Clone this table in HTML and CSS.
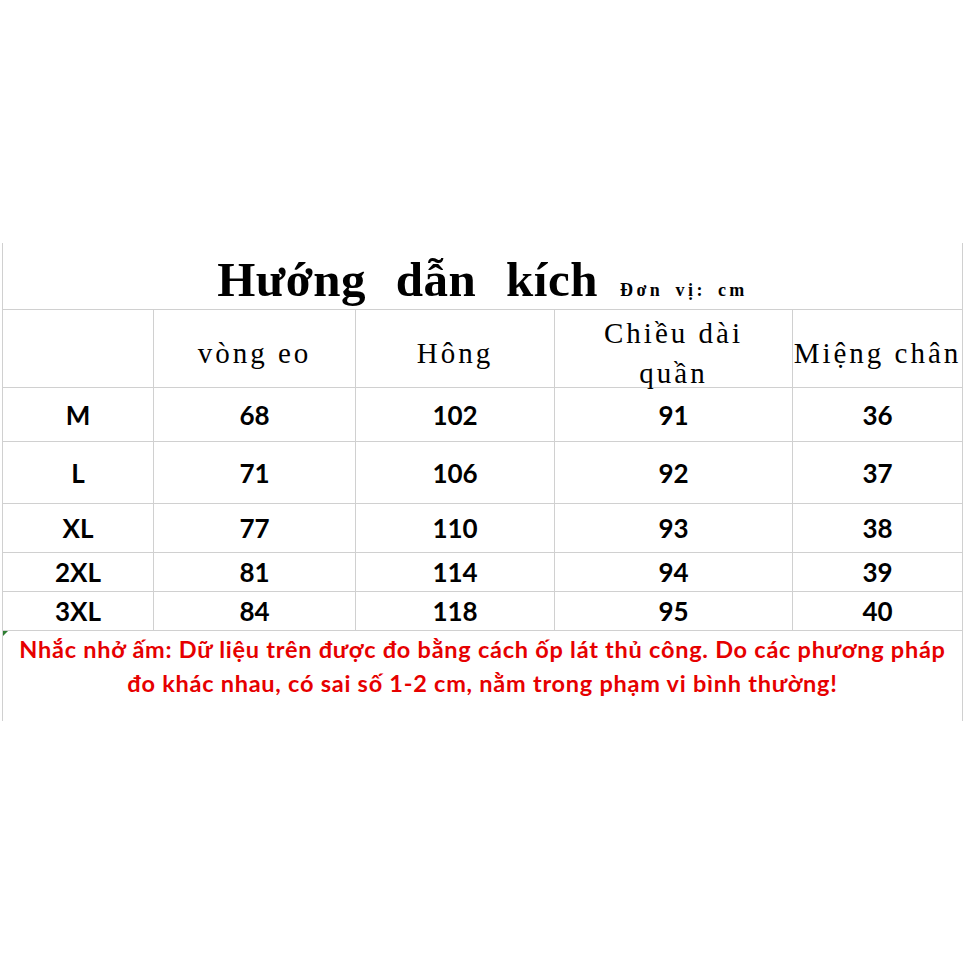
FILE: index.html
```html
<!DOCTYPE html>
<html lang="vi">
<head>
<meta charset="utf-8">
<title>Hướng dẫn kích</title>
<link rel="stylesheet" href="styles.css">
</head>
<body>
<div class="sheet">
  <div class="title-row">
    <span class="title">Hướng dẫn kích</span>
    <span class="unit">Đơn vị: cm</span>
  </div>
  <div class="grid">
    <div class="cell head"></div>
    <div class="cell head">vòng eo</div>
    <div class="cell head">Hông</div>
    <div class="cell head two">Chiều dài<br>quần</div>
    <div class="cell head last">Miệng chân</div>

    <div class="cell data r1">M</div>
    <div class="cell data r1">68</div>
    <div class="cell data r1">102</div>
    <div class="cell data r1">91</div>
    <div class="cell data r1 last">36</div>

    <div class="cell data r2">L</div>
    <div class="cell data r2">71</div>
    <div class="cell data r2">106</div>
    <div class="cell data r2">92</div>
    <div class="cell data r2 last">37</div>

    <div class="cell data r3">XL</div>
    <div class="cell data r3">77</div>
    <div class="cell data r3">110</div>
    <div class="cell data r3">93</div>
    <div class="cell data r3 last">38</div>

    <div class="cell data r4">2XL</div>
    <div class="cell data r4">81</div>
    <div class="cell data r4">114</div>
    <div class="cell data r4">94</div>
    <div class="cell data r4 last">39</div>

    <div class="cell data r5">3XL</div>
    <div class="cell data r5">84</div>
    <div class="cell data r5">118</div>
    <div class="cell data r5">95</div>
    <div class="cell data r5 last">40</div>
  </div>
  <div class="note">
    <p>Nhắc nhở ấm: Dữ liệu trên được đo bằng cách ốp lát thủ công. Do các phương pháp<br>đo khác nhau, có sai số 1-2 cm, nằm trong phạm vi bình thường!</p>
  </div>
</div>
</body>
</html>
```
FILE: styles.css
```css
html, body {
  margin: 0;
  padding: 0;
  background: #ffffff;
}

.sheet {
  box-sizing: border-box;
  width: 961px;
  margin: 243px 0 0 2px;
  border-left: 1px solid #d0d0d0;
  border-right: 1px solid #d0d0d0;
  color: #000;
}

.title-row {
  box-sizing: border-box;
  height: 67px;
  border-bottom: 1px solid #d0d0d0;
  display: flex;
  justify-content: center;
  align-items: baseline;
  padding-top: 12px;
  padding-left: 0;
}

.title {
  font-family: "Liberation Serif", "Times New Roman", serif;
  font-weight: 700;
  font-size: 49px;
  line-height: 1;
  word-spacing: 17px;
  letter-spacing: 0.5px;
}

.unit {
  font-family: "Liberation Serif", "Times New Roman", serif;
  font-weight: 700;
  font-size: 18px;
  letter-spacing: 3.5px;
  word-spacing: 4px;
  margin-left: 22px;
}

.grid {
  display: grid;
  grid-template-columns: 151px 202px 199px 238px 1fr;
  grid-template-rows: 78px 54px 62px 49px 39px 39px;
}

.cell {
  box-sizing: border-box;
  border-right: 1px solid #d0d0d0;
  border-bottom: 1px solid #d0d0d0;
  display: flex;
  align-items: center;
  justify-content: center;
  text-align: center;
  white-space: nowrap;
}

.cell.last {
  border-right: none;
}

.head {
  font-family: "Liberation Serif", "Times New Roman", serif;
  font-size: 29px;
  line-height: 40px;
  letter-spacing: 3px;
  padding-top: 8px;
}

.data {
  font-family: "Lato", "Open Sans", sans-serif;
  font-weight: 700;
  font-size: 26px;
  line-height: 30px;
  padding-top: 0;
}

.note {
  position: relative;
  box-sizing: border-box;
  height: 90px;
  padding-top: 1px;
}

.note::before {
  content: "";
  position: absolute;
  left: 0;
  top: 0;
  width: 0;
  height: 0;
  border-top: 5px solid #2e7d32;
  border-right: 5px solid transparent;
}

.note p {
  margin: 0;
  font-family: "Lato", "Open Sans", sans-serif;
  font-weight: 700;
  font-size: 23.5px;
  letter-spacing: 0.75px;
  line-height: 34px;
  color: #e60000;
  text-align: center;
  white-space: nowrap;
}
```
